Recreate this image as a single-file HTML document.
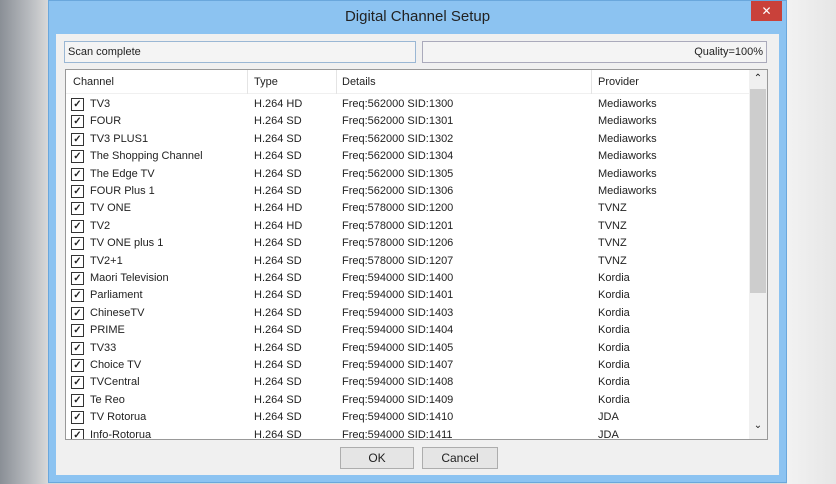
<!DOCTYPE html>
<html><head><meta charset="utf-8"><style>
*{margin:0;padding:0;box-sizing:border-box}
body{width:836px;height:484px;overflow:hidden;position:relative;font-family:"Liberation Sans",sans-serif;font-size:11px;color:#222;background:linear-gradient(90deg,#8a8f96 0,#b9bcc0 30px,#d8d8d8 48px)}
#rbg{position:absolute;left:787px;top:0;width:49px;height:484px;background:linear-gradient(90deg,#f2f2f2,#e6e6e6)}
#frame{position:absolute;left:48px;top:0;width:739px;height:483px;background:#8cc3f1;border:1px solid #6aa7dc}
#title{position:absolute;left:0;right:0;top:7px;text-align:center;font-size:15px;color:#222}
#close{position:absolute;left:702px;top:0;width:31px;height:20px;background:#c9413a;color:#fff;text-align:center;font-size:12px;line-height:20px}
#inner{position:absolute;left:56px;top:34px;width:723px;height:441px;background:#f0f0f0}
.fld{position:absolute;top:41px;height:22px;border:1px solid #aab;background:#f4f4f4;line-height:20px;padding:0 3px}
#list{position:absolute;left:65px;top:69px;width:703px;height:371px;background:#fff;border:1px solid #999;overflow:hidden}
#hdr{position:absolute;left:0;top:0;width:684px;height:24px;background:#fff;border-bottom:1px solid #f0f0f0}
.h{position:absolute;top:6px}
.sep{position:absolute;top:0;width:1px;height:24px;background:#e4e4e4}
#sb{position:absolute;left:683px;top:0;width:18px;height:369px;background:#f0f0f0}
#thumb{position:absolute;left:1px;top:19px;width:16px;height:204px;background:#cdcdcd}
.row{position:absolute;left:0;height:17px;width:684px;line-height:17px}
.row span{position:absolute;top:0}
.cb{position:absolute;left:5px;top:2px;width:13px;height:13px;border:1px solid #333;background:#fff;font-size:10px;line-height:11px;text-align:center;font-weight:bold}
.btn{position:absolute;top:447px;height:22px;border:1px solid #adadad;background:#e5e5e5;text-align:center;line-height:20px;font-size:12px}
</style></head><body>
<div id="rbg"></div>
<div id="frame"><div id="title">Digital Channel Setup</div><div id="close">✕</div></div>
<div id="inner"></div>
<div class="fld" style="left:64px;width:352px;border-color:#9ab7d4">Scan complete</div>
<div class="fld" style="left:422px;width:345px;text-align:right">Quality=100%</div>
<div id="list">
<div id="hdr"><span class="h" style="left:7px">Channel</span><div class="sep" style="left:181px"></div><span class="h" style="left:188px">Type</span><div class="sep" style="left:270px"></div><span class="h" style="left:276px">Details</span><div class="sep" style="left:525px"></div><span class="h" style="left:532px">Provider</span></div>
<div id="sb"><div style="position:absolute;top:3px;width:18px;text-align:center;font-size:10px">&#8963;</div><div id="thumb"></div><div style="position:absolute;top:350px;width:18px;text-align:center;font-size:10px">&#8964;</div></div>
</div>
<div class="btn" style="left:340px;width:74px">OK</div>
<div class="btn" style="left:422px;width:76px">Cancel</div>
<div style="position:absolute;left:66px;top:96px;width:683px;height:343px;overflow:hidden">
<div class="row" style="top:0px"><div class="cb">✓</div><span style="left:24px">TV3</span><span style="left:188px">H.264 HD</span><span style="left:276px">Freq:562000 SID:1300</span><span style="left:532px">Mediaworks</span></div>
<div class="row" style="top:17.4px"><div class="cb">✓</div><span style="left:24px">FOUR</span><span style="left:188px">H.264 SD</span><span style="left:276px">Freq:562000 SID:1301</span><span style="left:532px">Mediaworks</span></div>
<div class="row" style="top:34.8px"><div class="cb">✓</div><span style="left:24px">TV3 PLUS1</span><span style="left:188px">H.264 SD</span><span style="left:276px">Freq:562000 SID:1302</span><span style="left:532px">Mediaworks</span></div>
<div class="row" style="top:52.2px"><div class="cb">✓</div><span style="left:24px">The Shopping Channel</span><span style="left:188px">H.264 SD</span><span style="left:276px">Freq:562000 SID:1304</span><span style="left:532px">Mediaworks</span></div>
<div class="row" style="top:69.6px"><div class="cb">✓</div><span style="left:24px">The Edge TV</span><span style="left:188px">H.264 SD</span><span style="left:276px">Freq:562000 SID:1305</span><span style="left:532px">Mediaworks</span></div>
<div class="row" style="top:87px"><div class="cb">✓</div><span style="left:24px">FOUR Plus 1</span><span style="left:188px">H.264 SD</span><span style="left:276px">Freq:562000 SID:1306</span><span style="left:532px">Mediaworks</span></div>
<div class="row" style="top:104.4px"><div class="cb">✓</div><span style="left:24px">TV ONE</span><span style="left:188px">H.264 HD</span><span style="left:276px">Freq:578000 SID:1200</span><span style="left:532px">TVNZ</span></div>
<div class="row" style="top:121.8px"><div class="cb">✓</div><span style="left:24px">TV2</span><span style="left:188px">H.264 HD</span><span style="left:276px">Freq:578000 SID:1201</span><span style="left:532px">TVNZ</span></div>
<div class="row" style="top:139.2px"><div class="cb">✓</div><span style="left:24px">TV ONE plus 1</span><span style="left:188px">H.264 SD</span><span style="left:276px">Freq:578000 SID:1206</span><span style="left:532px">TVNZ</span></div>
<div class="row" style="top:156.6px"><div class="cb">✓</div><span style="left:24px">TV2+1</span><span style="left:188px">H.264 SD</span><span style="left:276px">Freq:578000 SID:1207</span><span style="left:532px">TVNZ</span></div>
<div class="row" style="top:174px"><div class="cb">✓</div><span style="left:24px">Maori Television</span><span style="left:188px">H.264 SD</span><span style="left:276px">Freq:594000 SID:1400</span><span style="left:532px">Kordia</span></div>
<div class="row" style="top:191.4px"><div class="cb">✓</div><span style="left:24px">Parliament</span><span style="left:188px">H.264 SD</span><span style="left:276px">Freq:594000 SID:1401</span><span style="left:532px">Kordia</span></div>
<div class="row" style="top:208.8px"><div class="cb">✓</div><span style="left:24px">ChineseTV</span><span style="left:188px">H.264 SD</span><span style="left:276px">Freq:594000 SID:1403</span><span style="left:532px">Kordia</span></div>
<div class="row" style="top:226.2px"><div class="cb">✓</div><span style="left:24px">PRIME</span><span style="left:188px">H.264 SD</span><span style="left:276px">Freq:594000 SID:1404</span><span style="left:532px">Kordia</span></div>
<div class="row" style="top:243.6px"><div class="cb">✓</div><span style="left:24px">TV33</span><span style="left:188px">H.264 SD</span><span style="left:276px">Freq:594000 SID:1405</span><span style="left:532px">Kordia</span></div>
<div class="row" style="top:261px"><div class="cb">✓</div><span style="left:24px">Choice TV</span><span style="left:188px">H.264 SD</span><span style="left:276px">Freq:594000 SID:1407</span><span style="left:532px">Kordia</span></div>
<div class="row" style="top:278.4px"><div class="cb">✓</div><span style="left:24px">TVCentral</span><span style="left:188px">H.264 SD</span><span style="left:276px">Freq:594000 SID:1408</span><span style="left:532px">Kordia</span></div>
<div class="row" style="top:295.8px"><div class="cb">✓</div><span style="left:24px">Te Reo</span><span style="left:188px">H.264 SD</span><span style="left:276px">Freq:594000 SID:1409</span><span style="left:532px">Kordia</span></div>
<div class="row" style="top:313.2px"><div class="cb">✓</div><span style="left:24px">TV Rotorua</span><span style="left:188px">H.264 SD</span><span style="left:276px">Freq:594000 SID:1410</span><span style="left:532px">JDA</span></div>
<div class="row" style="top:330.6px"><div class="cb">✓</div><span style="left:24px">Info-Rotorua</span><span style="left:188px">H.264 SD</span><span style="left:276px">Freq:594000 SID:1411</span><span style="left:532px">JDA</span></div>
</div>
</body></html>
